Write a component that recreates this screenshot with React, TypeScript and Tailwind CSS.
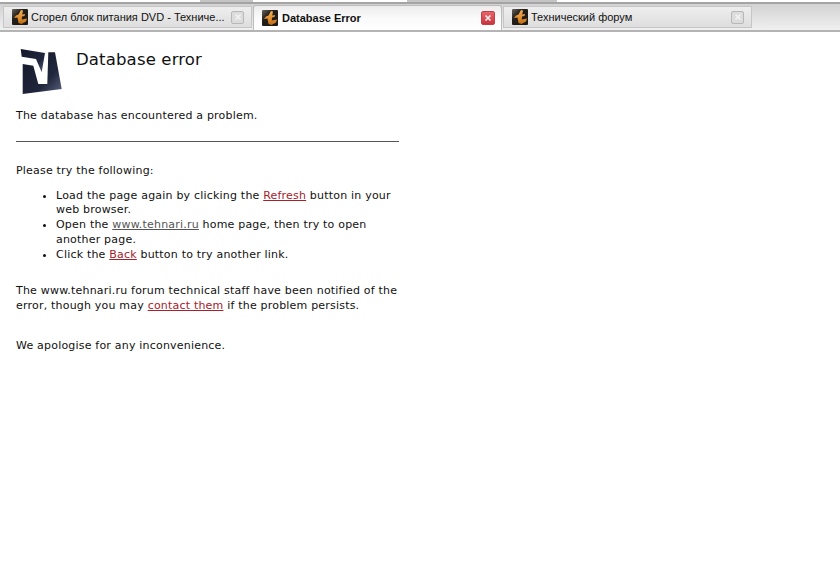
const Favicon = () => (
  <svg width="16" height="16" viewBox="0 0 16 16" className="shrink-0">
    <defs>
      <linearGradient id="fg" x1="0" y1="0" x2="0" y2="1">
        <stop offset="0" stopColor="#eeb060" />
        <stop offset="0.6" stopColor="#e08a28" />
        <stop offset="1" stopColor="#b86a18" />
      </linearGradient>
      <linearGradient id="bg" x1="0" y1="0" x2="1" y2="1">
        <stop offset="0" stopColor="#6a645c" />
        <stop offset="0.35" stopColor="#24201c" />
        <stop offset="1" stopColor="#1a1714" />
      </linearGradient>
    </defs>
    <rect width="16" height="16" rx="1" fill="url(#bg)" />
    <path d="M9 1 L11 1.5 L10.2 5.5 L13 5 L12.5 7 L10 7.5 L9.8 10.5 L15 9.5 L14 12.5 L9.5 15 L6.5 14 L5.5 8.5 L2 9 L4 6.5 L6.5 5.5 Z" fill="url(#fg)" />
  </svg>
);

const Close = ({ active }: { active?: boolean }) =>
  active ? (
    <div className="w-[14px] h-[14px] rounded-[2px] border border-[#c04048] bg-gradient-to-b from-[#e8636a] to-[#c8343e] flex items-center justify-center shrink-0">
      <svg width="8" height="8" viewBox="0 0 8 8">
        <path d="M1.5 1.5 L6.5 6.5 M6.5 1.5 L1.5 6.5" stroke="#fbeaea" strokeWidth="1.7" />
      </svg>
    </div>
  ) : (
    <div className="w-[13px] h-[13px] rounded-[2px] border border-[#b8b8b8] bg-[#dcdcdc] flex items-center justify-center shrink-0">
      <svg width="8" height="8" viewBox="0 0 8 8">
        <path d="M1.5 1.5 L6.5 6.5 M6.5 1.5 L1.5 6.5" stroke="#f2f2f2" strokeWidth="1.7" />
      </svg>
    </div>
  );

const Tab = ({ title, active }: { title: string; active?: boolean }) => (
  <div
    className={
      active
        ? "w-[249px] h-[25px] -mt-[1px] flex items-center pl-[8px] pr-[6px] rounded-t-[3px] border border-b-0 border-[#bcbcbc] bg-gradient-to-b from-[#ececec] via-[#fafafa] to-[#ffffff] shrink-0"
        : "w-[249px] h-[22px] flex items-center pl-[8px] pr-[7px] border border-[#c6c6c6] bg-gradient-to-b from-[#eeeeee] to-[#dedede] shrink-0"
    }
  >
    <Favicon />
    <span
      className={`${active ? "ml-[4px] font-bold" : "ml-[3px]"} flex-1 truncate text-[11px] text-[#111]`}
      style={{ fontFamily: '"Liberation Sans", sans-serif' }}
    >
      {title}
    </span>
    <Close active={active} />
  </div>
);

const A = ({ children, grey }: { children: React.ReactNode; grey?: boolean }) => (
  <a className={`underline ${grey ? "text-[#555]" : "text-[#a5222a]"}`} href="#">
    {children}
  </a>
);

export default function App() {
  return (
    <div className="w-[840px] h-[575px] bg-white overflow-hidden">
      <div className="h-[2px] flex">
        <div className="ml-[200px] w-[53px] bg-[#c4c4c4]" />
        <div className="ml-[154px] w-[150px] bg-[#c4c4c4]" />
      </div>
      <div className="h-[30px] bg-gradient-to-b from-[#d2d2d2] to-[#f0f0f0] border-b-2 border-[#b4b4b4] border-t-2 border-t-[#a4a4a4] pt-[2px] pl-[3px] flex gap-[1px]">
        <Tab title="Сгорел блок питания DVD - Техниче..." />
        <Tab active title="Database Error" />
        <Tab title="Технический форум" />
      </div>
      <div
        className="pl-[16px] text-[11px] leading-[14.75px] tracking-[0.2px] text-[#111] w-[415px]"
        style={{ fontFamily: '"DejaVu Sans", sans-serif' }}
      >
        <div className="flex h-[77px]">
          <svg width="48" height="50" viewBox="16 46 48 50" className="mt-[14px] shrink-0">
            <defs>
              <linearGradient id="lg" x1="0" y1="0" x2="1" y2="1">
                <stop offset="0" stopColor="#141828" />
                <stop offset="0.65" stopColor="#20263c" />
                <stop offset="1" stopColor="#5c6480" />
              </linearGradient>
            </defs>
            <polygon points="20.7,49 45,53 41.7,72.3 36,59 21.7,56.7" fill="url(#lg)" />
            <polygon points="48.3,52.3 55,52.3 61.7,89 22.7,94 22.7,64 33.3,65.7 38.3,84 47.3,84" fill="url(#lg)" />
          </svg>
          <h1 className="ml-[12px] mt-[18px] text-[16.5px] leading-[20px] tracking-[0.15px] font-normal text-[#111]">Database error</h1>
        </div>
        <p>The database has encountered a problem.</p>
        <hr className="mt-[17px] w-[383px] border-0 border-t border-[#555]" />
        <p className="mt-[22px]">Please try the following:</p>
        <ul className="mt-[10px] pl-[40px] list-disc w-[383px]">
          <li>
            Load the page again by clicking the <A>Refresh</A> button in your web browser.
          </li>
          <li>
            Open the <A grey>www.tehnari.ru</A> home page, then try to open another page.
          </li>
          <li>
            Click the <A>Back</A> button to try another link.
          </li>
        </ul>
        <p className="mt-[22px] w-[383px]">
          The www.tehnari.ru forum technical staff have been notified of the error, though you may <A>contact them</A> if the problem persists.
        </p>
        <p className="mt-[25px]">We apologise for any inconvenience.</p>
      </div>
    </div>
  );
}
